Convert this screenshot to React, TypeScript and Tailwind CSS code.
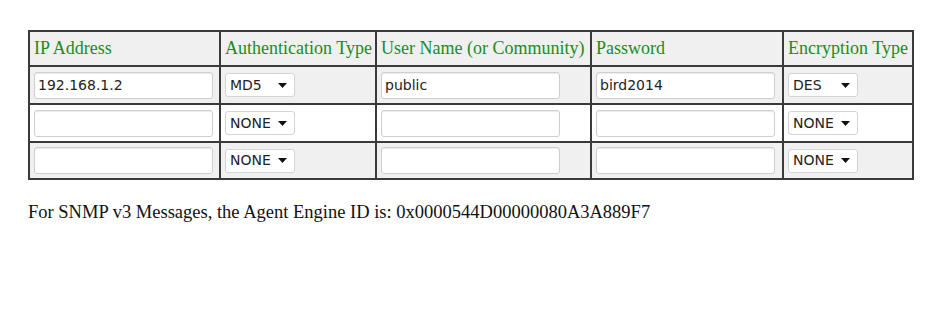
import React from 'react';

type Row = {
  ip: string;
  auth: string;
  user: string;
  password: string;
  enc: string;
  shaded: boolean;
};

const rows: Row[] = [
  { ip: '192.168.1.2', auth: 'MD5', user: 'public', password: 'bird2014', enc: 'DES', shaded: true },
  { ip: '', auth: 'NONE', user: '', password: '', enc: 'NONE', shaded: false },
  { ip: '', auth: 'NONE', user: '', password: '', enc: 'NONE', shaded: true },
];

const TextBox = ({ value }: { value: string }) => (
  <div className="h-[27px] w-[179px] rounded-[3px] border border-[#cfcfcf] bg-white px-[3px] shadow-[inset_0_1px_1px_rgba(0,0,0,0.08)] flex items-center text-[14px] text-[#222] [font-family:'DejaVu_Sans',sans-serif]">
    {value}
  </div>
);

const FakeSelect = ({ value }: { value: string }) => (
  <div className="h-[24px] w-[70px] rounded-[3px] border border-[#d4d4d4] bg-white pl-[4px] pr-[5px] flex items-center justify-between text-[14px] text-[#222] [font-family:'DejaVu_Sans',sans-serif]">
    <span>{value}</span>
    <svg width="9" height="5" viewBox="0 0 9 5" className="mr-[2px]">
      <path d="M0 0 L9 0 L4.5 5 Z" fill="#111" />
    </svg>
  </div>
);

const headers = ['IP Address', 'Authentication Type', 'User Name (or Community)', 'Password', 'Encryption Type'];

export default function App() {
  return (
    <div className="w-[942px] h-[313px] bg-white pt-[30px] pl-[28px] [font-family:'Liberation_Serif',serif]">
      <table className="table-fixed border-collapse border-2 border-[#3a3a3a] w-[884px]">
        <colgroup>
          <col className="w-[191px]" />
          <col className="w-[156px]" />
          <col className="w-[215px]" />
          <col className="w-[192px]" />
          <col className="w-[130px]" />
        </colgroup>
        <thead>
          <tr className="h-[35px] bg-[#f0f0f0]">
            {headers.map((h) => (
              <th
                key={h}
                className="border-2 border-[#3a3a3a] px-[4px] text-left font-normal text-[18px] text-[#1f8a1f] whitespace-nowrap"
              >
                {h}
              </th>
            ))}
          </tr>
        </thead>
        <tbody>
          {rows.map((r, i) => (
            <tr
              key={i}
              className={`${i === 2 ? 'h-[37px]' : 'h-[38px]'} ${r.shaded ? 'bg-[#f0f0f0]' : 'bg-white'}`}
            >
              <td className="border-2 border-[#3a3a3a] px-[4px]">
                <TextBox value={r.ip} />
              </td>
              <td className="border-2 border-[#3a3a3a] px-[4px]">
                <FakeSelect value={r.auth} />
              </td>
              <td className="border-2 border-[#3a3a3a] px-[4px]">
                <TextBox value={r.user} />
              </td>
              <td className="border-2 border-[#3a3a3a] px-[4px]">
                <TextBox value={r.password} />
              </td>
              <td className="border-2 border-[#3a3a3a] px-[4px]">
                <FakeSelect value={r.enc} />
              </td>
            </tr>
          ))}
        </tbody>
      </table>
      <p className="mt-[19px] text-[18.5px] text-[#111]">
        For SNMP v3 Messages, the Agent Engine ID is: 0x0000544D00000080A3A889F7
      </p>
    </div>
  );
}
